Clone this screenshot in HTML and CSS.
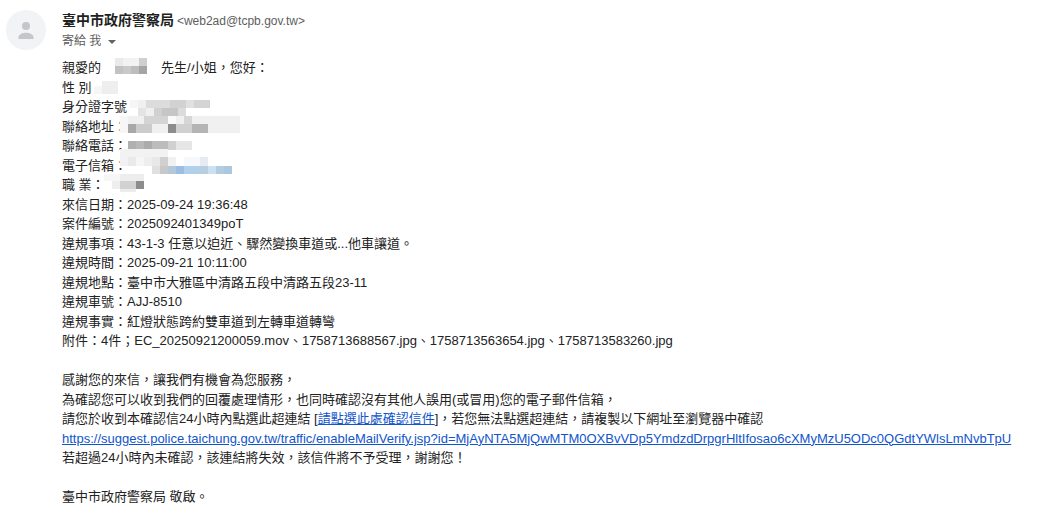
FILE: index.html
```html
<!DOCTYPE html>
<html lang="zh-Hant">
<head>
<meta charset="utf-8">
<title>確認信</title>
<link rel="stylesheet" href="styles.css">
</head>
<body>
<div class="mail">
  <div class="avatar">
    <svg width="40" height="40" viewBox="0 0 40 40"><circle cx="20" cy="16" r="4" fill="#c4c7c9"/><path d="M12.500 29v-2c0-2.800 5-4.300 7.500-4.300s7.500 1.500 7.500 4.300v2z" fill="#c4c7c9"/></svg>
  </div>
  <div class="content">
    <div class="sender"><b class="name">臺中市政府警察局</b> <span class="addr">&lt;web2ad@tcpb.gov.tw&gt;</span></div>
    <div class="to">寄給 我 <svg class="caret" width="8" height="4" viewBox="0 0 8 4"><path d="M0 0h8L4 4z" fill="#5f6368"/></svg></div>
    <div class="body">
      <div class="row">親愛的<svg class="mos m-salute" width="32" height="16" viewBox="0 0 32 16"><rect x="0" y="0" width="8" height="8" fill="#eaeaea"/><rect x="8" y="0" width="16" height="8" fill="#f2f2f2"/><rect x="24" y="0" width="8" height="8" fill="#cfcfcf"/><rect x="0" y="8" width="8" height="8" fill="#c2c2c2"/><rect x="8" y="8" width="8" height="8" fill="#c9c9c9"/><rect x="16" y="8" width="8" height="8" fill="#bdbdbd"/><rect x="24" y="8" width="8" height="8" fill="#a5a5a5"/></svg>先生/小姐，您好：</div>
      <div class="row">性 別<svg class="mos m-gender" width="24" height="14" viewBox="0 0 24 14"><rect x="8" y="0" width="16" height="13" fill="#eeeeee"/><rect x="0" y="5" width="8" height="8" fill="#f6f6f6"/></svg></div>
      <div class="row">身分證字號<svg class="mos m-id" width="80" height="16" viewBox="0 0 80 16"><rect x="0" y="0" width="8" height="8" fill="#f6f6f6"/><rect x="8" y="0" width="8" height="8" fill="#f0f0f0"/><rect x="16" y="0" width="24" height="8" fill="#dcdcdc"/><rect x="40" y="0" width="16" height="8" fill="#d2d2d2"/><rect x="56" y="0" width="8" height="8" fill="#e0e0e0"/><rect x="64" y="0" width="16" height="8" fill="#d4d4d4"/><rect x="8" y="8" width="8" height="8" fill="#e4e4e4"/><rect x="16" y="8" width="8" height="8" fill="#f0f0f0"/><rect x="24" y="8" width="8" height="8" fill="#d0d0d0"/><rect x="32" y="8" width="16" height="8" fill="#c6c6c6"/><rect x="48" y="8" width="8" height="8" fill="#dcdcdc"/></svg></div>
      <div class="row">聯絡地址：<svg class="mos m-addr" width="120" height="17" viewBox="0 0 120 17"><rect x="0" y="0" width="120" height="17" fill="#f0f0f0"/><rect x="0" y="0" width="8" height="17" fill="#f6f6f6"/><rect x="24" y="0" width="24" height="8" fill="#d4d4d4"/><rect x="48" y="0" width="8" height="8" fill="#fafafa"/><rect x="64" y="0" width="8" height="8" fill="#d6d6d6"/><rect x="8" y="8" width="8" height="9" fill="#a8a8a8"/><rect x="16" y="8" width="16" height="9" fill="#cccccc"/><rect x="48" y="8" width="8" height="9" fill="#8c8c8c"/><rect x="56" y="8" width="16" height="9" fill="#d0d0d0"/><rect x="72" y="8" width="16" height="9" fill="#b4b4b4"/></svg></div>
      <div class="row">聯絡電話：<svg class="mos m-phone" width="72" height="9" viewBox="0 0 72 9"><rect x="8" y="0" width="8" height="9" fill="#b0b0b0"/><rect x="16" y="0" width="8" height="9" fill="#b8b8b8"/><rect x="24" y="0" width="8" height="9" fill="#acacac"/><rect x="32" y="0" width="16" height="9" fill="#bcbcbc"/><rect x="48" y="0" width="8" height="9" fill="#d0d0d0"/><rect x="56" y="0" width="16" height="9" fill="#e6e6e6"/></svg></div>
      <div class="row">電子信箱：<svg class="mos m-mail" width="112" height="25" viewBox="0 0 112 25"><rect x="0" y="0" width="48" height="8" fill="#f2f2f2"/><rect x="0" y="8" width="8" height="9" fill="#f2f2f2"/><rect x="8" y="8" width="8" height="9" fill="#eaeaea"/><rect x="16" y="8" width="8" height="9" fill="#f6f6f6"/><rect x="24" y="8" width="8" height="9" fill="#eeeeee"/><rect x="32" y="8" width="8" height="9" fill="#e8e8e8"/><rect x="40" y="8" width="8" height="9" fill="#d0d0d0"/><rect x="48" y="8" width="8" height="9" fill="#f0f2f2"/><rect x="64" y="8" width="16" height="9" fill="#f5f9fc"/><rect x="80" y="8" width="8" height="9" fill="#e6ebf3"/><rect x="32" y="17" width="8" height="8" fill="#e0e0e0"/><rect x="40" y="17" width="8" height="8" fill="#c8c8c8"/><rect x="48" y="17" width="8" height="8" fill="#b4c8dc"/><rect x="56" y="17" width="8" height="8" fill="#9dbde3"/><rect x="64" y="17" width="16" height="8" fill="#b2d0ea"/><rect x="80" y="17" width="8" height="8" fill="#b8cfe0"/><rect x="88" y="17" width="8" height="8" fill="#cbe0f0"/><rect x="96" y="17" width="8" height="8" fill="#b2cde2"/><rect x="104" y="17" width="8" height="8" fill="#abc8de"/></svg></div>
      <div class="row">職 業：<svg class="mos m-job" width="40" height="18" viewBox="0 0 40 18"><rect x="0" y="0" width="16" height="7" fill="#f6f6f6"/><rect x="16" y="0" width="24" height="7" fill="#ededed"/><rect x="8" y="7" width="8" height="8" fill="#eeeeee"/><rect x="16" y="7" width="16" height="8" fill="#d2d2d2"/><rect x="32" y="7" width="8" height="8" fill="#8c8c8c"/><rect x="16" y="15" width="16" height="3" fill="#ececec"/></svg></div>
      <div class="row">來信日期：2025-09-24 19:36:48</div>
      <div class="row">案件編號：2025092401349poT</div>
      <div class="row">違規事項：43-1-3 任意以迫近、驟然變換車道或...他車讓道。</div>
      <div class="row">違規時間：2025-09-21 10:11:00</div>
      <div class="row">違規地點：臺中市大雅區中清路五段中清路五段23-11</div>
      <div class="row">違規車號：AJJ-8510</div>
      <div class="row">違規事實：紅燈狀態跨約雙車道到左轉車道轉彎</div>
      <div class="row">附件：4件；EC_20250921200059.mov、1758713688567.jpg、1758713563654.jpg、1758713583260.jpg</div>
      <div class="row"></div>
      <div class="row">感謝您的來信，讓我們有機會為您服務，</div>
      <div class="row">為確認您可以收到我們的回覆處理情形，也同時確認沒有其他人誤用(或冒用)您的電子郵件信箱，</div>
      <div class="row">請您於收到本確認信24小時內點選此超連結 [<a href="#">請點選此處確認信件</a>]，若您無法點選超連結，請複製以下網址至瀏覽器中確認</div>
      <div class="row"><a href="#">https://suggest.police.taichung.gov.tw/traffic/enableMailVerify.jsp?id=MjAyNTA5MjQwMTM0OXBvVDp5YmdzdDrpgrHltIfosao6cXMyMzU5ODc0QGdtYWlsLmNvbTpU</a></div>
      <div class="row">若超過24小時內未確認，該連結將失效，該信件將不予受理，謝謝您！</div>
      <div class="row"></div>
      <div class="row">臺中市政府警察局 敬啟。</div>
    </div>
  </div>
</div>
</body>
</html>
```
FILE: styles.css
```css
html, body { margin: 0; padding: 0; background: #fff; overflow: hidden; }
body { font-family: "Liberation Sans", Arial, "Noto Sans CJK TC", sans-serif; color: #222; }
.mail { display: flex; gap: 16px; padding: 10px 0 0 6px; }
.avatar { width: 40px; height: 40px; border-radius: 50%; background: #f1f3f4; flex: none; }
.avatar svg { display: block; }
.content { min-width: 0; }
.sender { font-size: 14px; line-height: 20px; white-space: nowrap; }
.name { color: #1f1f1f; font-weight: 700; }
.addr { font-size: 12px; color: #5e5e5e; margin-left: -1px; }
.to { font-size: 12px; line-height: 20px; color: #5e5e5e; white-space: nowrap; }
.caret { margin-left: 3px; vertical-align: middle; }
.body { font-size: 13px; line-height: 19.5px; margin-top: 7px; white-space: nowrap; }
.row { height: 19.5px; }
.mos { vertical-align: top; }
.m-salute { margin: 0 14px 0 14px; }
.m-gender { margin: 3px 0 0 2px; }
.m-id { margin: 3px 0 0 3px; }
.m-addr { margin: -1px 0 0 -7px; }
.m-phone { margin: 5px 0 0 -7px; }
.m-mail { margin: -7px 0 0 -7px; }
.m-job { margin: -1px 0 0 -1px; }
a { color: #15c; }
```
